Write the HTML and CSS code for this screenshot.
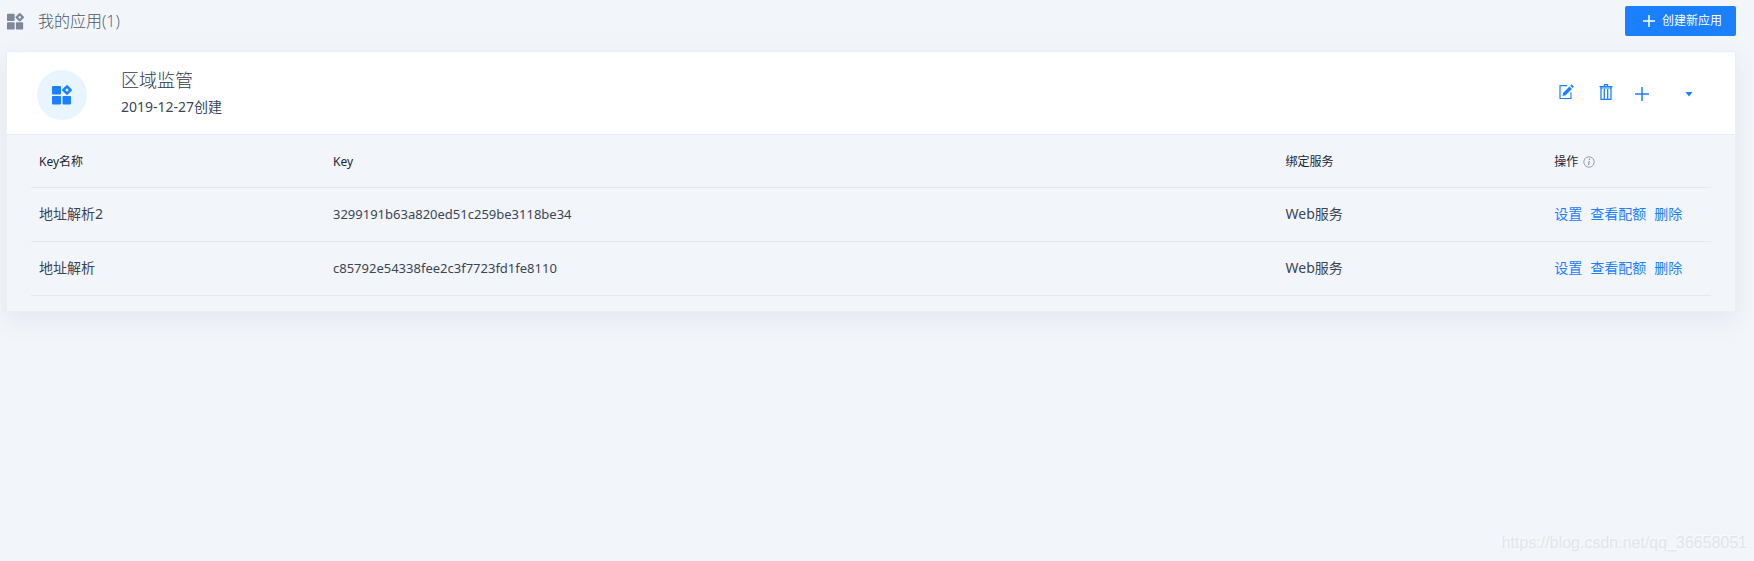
FILE: index.html
```html
<!DOCTYPE html>
<html lang="zh-CN">
<head>
<meta charset="utf-8">
<title>我的应用</title>
<link rel="stylesheet" href="styles.css">
</head>
<body>
<svg class="sprite" aria-hidden="true">
  <symbol id="apps" viewBox="0 0 20 20">
    <rect x="0" y="1" width="9" height="8.5" rx="1"/>
    <rect x="0" y="11" width="9" height="8.5" rx="1"/>
    <rect x="10.5" y="11" width="8.5" height="8.5" rx="1"/>
    <path fill-rule="evenodd" d="M14.2.4q.8-.8 1.6 0l3.8 3.8q.8.8 0 1.6l-3.8 3.8q-.8.8-1.6 0l-3.8-3.8q-.8-.8 0-1.600zM15 3.200l-1.800 1.800 1.800 1.800 1.800-1.800z"/>
  </symbol>
</svg>
<main class="page">
  <header class="topbar">
    <svg class="topbar-icon"><use href="#apps"/></svg>
    <h1 class="topbar-title">我的应用(1)</h1>
    <button class="create" type="button">
      <svg class="create-icon" viewBox="0 0 12 12"><path d="M6 0v12M0 6h12" stroke="currentColor" stroke-width="1.5"/></svg>
      创建新应用
    </button>
  </header>
  <section class="card">
    <div class="card-head">
      <span class="avatar"><svg class="avatar-icon"><use href="#apps"/></svg></span>
      <div class="app">
        <h2 class="app-name">区域监管</h2>
        <p class="app-date">2019-12-27创建</p>
      </div>
      <div class="actions">
        <button class="action edit" type="button" aria-label="编辑">
          <svg viewBox="0 0 16 16" width="16" height="16"><path d="M9 1.700H2v12.800h11V8.500" fill="none" stroke="currentColor" stroke-width="1.200"/><path d="M4.500 12l.7-3.200 6.300-6.300 2.400 2.400-6.300 6.300zM12.200 1.800l1-1q.4-.4.8 0l1.500 1.500q.4.4 0 .8l-1 1z" fill="currentColor"/></svg>
        </button>
        <button class="action trash" type="button" aria-label="删除">
          <svg viewBox="0 0 16 16" width="16" height="16"><path d="M6.500 2V.7h3V2M1.500 2.700h13M3 3v12.300h10V3M6.300 5v10M9.700 5v10" fill="none" stroke="currentColor" stroke-width="1.300"/><path d="M2.500 3h11v2h-11z" fill="currentColor" opacity=".5"/></svg>
        </button>
        <button class="action plus" type="button" aria-label="添加">
          <svg viewBox="0 0 16 16" width="16" height="16"><path d="M8 1v14M1 8h14" stroke="currentColor" stroke-width="1.500"/></svg>
        </button>
        <button class="action caret" type="button" aria-label="展开">
          <svg viewBox="0 0 8 16" width="8" height="16"><path d="M.5 6h7L4 10.500z" fill="currentColor"/></svg>
        </button>
      </div>
    </div>
    <div class="card-body">
      <table class="keys">
        <thead>
          <tr>
            <th class="col-name" scope="col">Key名称</th>
            <th class="col-key" scope="col">Key</th>
            <th class="col-service" scope="col">绑定服务</th>
            <th class="col-ops" scope="col"><span class="ops-label">操作
              <svg class="info" viewBox="0 0 12 12"><circle cx="6" cy="6" r="5.200" fill="none" stroke="currentColor" stroke-width=".8"/><path d="M6.600 2.700l-.2 1.200M6.200 5L5.600 9" fill="none" stroke="currentColor" stroke-width="1.100"/></svg></span></th>
          </tr>
        </thead>
        <tbody>
          <tr>
            <td>地址解析2</td>
            <td class="key">3299191b63a820ed51c259be3118be34</td>
            <td>Web服务</td>
            <td><span class="links"><a href="#">设置</a><a href="#">查看配额</a><a href="#">删除</a></span></td>
          </tr>
          <tr>
            <td>地址解析</td>
            <td class="key">c85792e54338fee2c3f7723fd1fe8110</td>
            <td>Web服务</td>
            <td><span class="links"><a href="#">设置</a><a href="#">查看配额</a><a href="#">删除</a></span></td>
          </tr>
        </tbody>
      </table>
    </div>
  </section>
  <footer class="watermark">https://blog.csdn.net/qq_36658051</footer>
</main>
</body>
</html>
```
FILE: styles.css
```css
* { box-sizing: border-box; }
body {
  margin: 0;
  background: #f2f5fa;
  color: #3b4558;
  font: 14px/20px "Noto Sans", "Noto Sans CJK SC", sans-serif;
}
h1, h2, p { margin: 0; font-weight: 400; }
button { font: inherit; border: 0; cursor: pointer; }
a { color: #1a80ff; text-decoration: none; }
svg { display: block; }
.sprite { position: absolute; width: 0; height: 0; }
.page {
  display: flex;
  flex-direction: column;
  min-height: 100vh;
  padding: 0 18px 0 6px;
}
.topbar {
  display: flex;
  align-items: center;
  height: 51px;
  padding: 0 0 9px 1px;
}
.topbar-icon { width: 17px; height: 17px; fill: #7d889b; }
.topbar-title {
  margin-left: 14px;
  color: #4b586b;
  font: 300 16px/24px "Open Sans", "Noto Sans CJK SC", sans-serif;
}
.create {
  display: flex;
  align-items: center;
  gap: 7px;
  height: 30px;
  margin-left: auto;
  padding: 0 14px 0 18px;
  border-radius: 2px;
  background: #1a80ff;
  color: #fff;
  font-size: 12px;
}
.create-icon { width: 12px; height: 12px; }
.card {
  border: 1px solid #ebeff3;
  box-shadow: 0 8px 24px rgba(60, 80, 100, .08);
}
.card-head {
  display: flex;
  align-items: center;
  height: 83px;
  padding: 0 42px 0 30px;
  border-bottom: 1px solid #e8ecf0;
  background: #fff;
}
.avatar {
  display: grid;
  place-items: center;
  width: 50px;
  height: 50px;
  margin-top: 4px;
  border-radius: 50%;
  background: #e8f5ff;
}
.avatar-icon { width: 20px; height: 20px; fill: #1a80ff; }
.app { margin-left: 34px; }
.app-name {
  color: #2f3a4d;
  font: 300 18px/28px "Open Sans", "Noto Sans CJK SC", sans-serif;
}
.app-date { line-height: 26px; }
.actions { display: flex; align-items: center; margin: -2px 0 0 auto; }
.action { padding: 0; background: none; color: #1a80ff; }
.trash { margin-left: 24px; }
.plus { margin: 4px 0 0 20px; }
.caret { margin: 4px 0 0 35px; }
.card-body { padding: 0 24px 15px; background: #f2f5fa; }
.keys {
  width: 100%;
  border-collapse: collapse;
  table-layout: fixed;
}
.keys th, .keys td {
  height: 54px;
  padding: 0 8px;
  border-bottom: 1px solid #e3e9ed;
  text-align: left;
  white-space: nowrap;
}
.keys th {
  height: 52px;
  padding-top: 2px;
  color: #1d2636;
  font-size: 12px;
  font-weight: 400;
}
.keys .key { font-size: 13px; }
.col-name { width: 17.5%; }
.col-key { width: 56.7%; }
.col-service { width: 16%; }
.ops-label { display: flex; align-items: center; gap: 5px; }
.info { width: 12px; height: 12px; color: #858c98; }
.links { display: flex; gap: 8px; }
.watermark {
  margin: auto -11px 6px auto;
  color: #e1e5ea;
  font: 16px/24px "Liberation Sans", Arial, sans-serif;
  text-shadow: -1px -1px 0 #fafcff;
}
```
